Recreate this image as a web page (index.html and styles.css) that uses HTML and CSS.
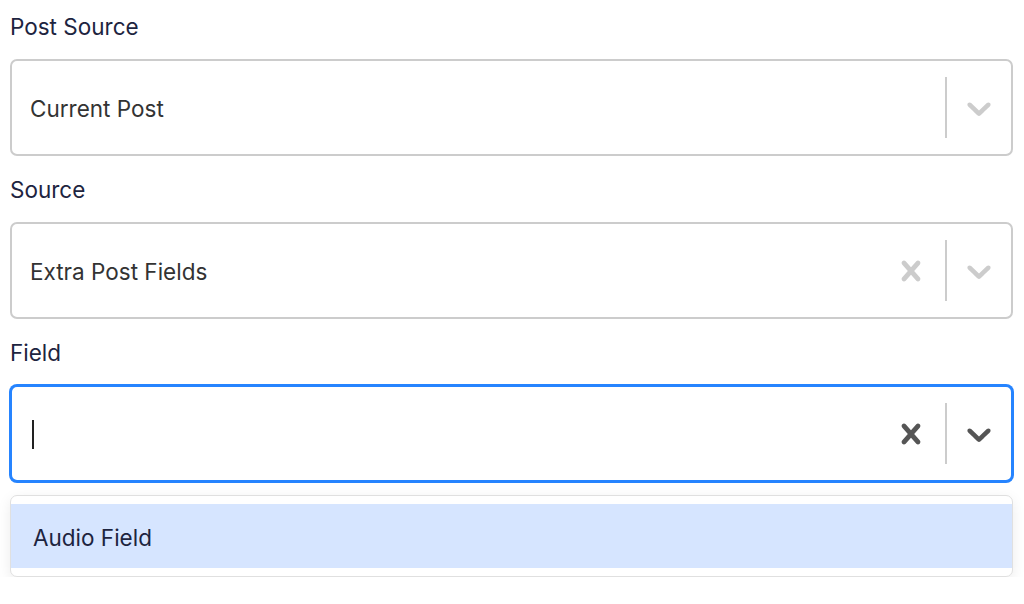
FILE: index.html
```html
<!DOCTYPE html>
<html lang="en">
<head>
    <meta charset="UTF-8">
    <meta name="viewport" content="width=device-width, initial-scale=1.0">
    <title>Dynamic Field</title>
    <link rel="stylesheet" href="styles.css">
</head>
<body>
    <div class="panel">
        <div class="field-group">
            <label class="field-label">Post Source</label>
            <div class="select-control">
                <div class="select-value">Current Post</div>
                <div class="select-indicators">
                    <span class="indicator-separator"></span>
                    <span class="indicator">
                        <svg viewBox="0 0 20 20" width="40" height="40"><path d="M4.516 7.548c0.436-0.446 1.043-0.481 1.576 0l3.908 3.747 3.908-3.747c0.533-0.481 1.141-0.446 1.574 0 0.436 0.445 0.408 1.197 0 1.615-0.406 0.418-4.695 4.502-4.695 4.502-0.217 0.223-0.502 0.335-0.787 0.335s-0.57-0.112-0.789-0.335c0 0-4.287-4.084-4.695-4.502s-0.436-1.17 0-1.615z"/></svg>
                    </span>
                </div>
            </div>
        </div>

        <div class="field-group">
            <label class="field-label">Source</label>
            <div class="select-control">
                <div class="select-value">Extra Post Fields</div>
                <div class="select-indicators">
                    <span class="indicator clear">
                        <svg viewBox="0 0 20 20" width="40" height="40"><path d="M14.348 14.849c-0.469 0.469-1.229 0.469-1.697 0l-2.651-3.030-2.651 3.029c-0.469 0.469-1.229 0.469-1.697 0-0.469-0.469-0.469-1.229 0-1.697l2.758-3.15-2.759-3.152c-0.469-0.469-0.469-1.228 0-1.697s1.228-0.469 1.697 0l2.652 3.031 2.651-3.031c0.469-0.469 1.228-0.469 1.697 0s0.469 1.229 0 1.697l-2.758 3.152 2.758 3.150c0.469 0.469 0.469 1.229 0 1.698z"/></svg>
                    </span>
                    <span class="indicator-separator"></span>
                    <span class="indicator">
                        <svg viewBox="0 0 20 20" width="40" height="40"><path d="M4.516 7.548c0.436-0.446 1.043-0.481 1.576 0l3.908 3.747 3.908-3.747c0.533-0.481 1.141-0.446 1.574 0 0.436 0.445 0.408 1.197 0 1.615-0.406 0.418-4.695 4.502-4.695 4.502-0.217 0.223-0.502 0.335-0.787 0.335s-0.57-0.112-0.789-0.335c0 0-4.287-4.084-4.695-4.502s-0.436-1.17 0-1.615z"/></svg>
                    </span>
                </div>
            </div>
        </div>

        <div class="field-group">
            <label class="field-label">Field</label>
            <div class="select-control is-focused">
                <div class="select-value"><span class="caret"></span></div>
                <div class="select-indicators">
                    <span class="indicator clear">
                        <svg viewBox="0 0 20 20" width="40" height="40"><path d="M14.348 14.849c-0.469 0.469-1.229 0.469-1.697 0l-2.651-3.030-2.651 3.029c-0.469 0.469-1.229 0.469-1.697 0-0.469-0.469-0.469-1.229 0-1.697l2.758-3.15-2.759-3.152c-0.469-0.469-0.469-1.228 0-1.697s1.228-0.469 1.697 0l2.652 3.031 2.651-3.031c0.469-0.469 1.228-0.469 1.697 0s0.469 1.229 0 1.697l-2.758 3.152 2.758 3.150c0.469 0.469 0.469 1.229 0 1.698z"/></svg>
                    </span>
                    <span class="indicator-separator"></span>
                    <span class="indicator">
                        <svg viewBox="0 0 20 20" width="40" height="40"><path d="M4.516 7.548c0.436-0.446 1.043-0.481 1.576 0l3.908 3.747 3.908-3.747c0.533-0.481 1.141-0.446 1.574 0 0.436 0.445 0.408 1.197 0 1.615-0.406 0.418-4.695 4.502-4.695 4.502-0.217 0.223-0.502 0.335-0.787 0.335s-0.57-0.112-0.789-0.335c0 0-4.287-4.084-4.695-4.502s-0.436-1.17 0-1.615z"/></svg>
                    </span>
                </div>
            </div>
            <div class="select-menu">
                <div class="select-option is-active">Audio Field</div>
            </div>
        </div>
    </div>
</body>
</html>
```

FILE: styles.css
```css
body {
    font-family: Inter, "Noto Sans", sans-serif;
    margin: 0;
    padding: 0;
    background-color: #ffffff;
}

.panel {
    display: flex;
    flex-direction: column;
    gap: 18px;
    padding: 11px 11px 0 10px;
}

.field-group {
    display: flex;
    flex-direction: column;
}

.field-label {
    font-size: 22.5px;
    line-height: 31px;
    color: #1d2440;
    margin-bottom: 17px;
}

.select-control {
    display: flex;
    align-items: stretch;
    height: 97px;
    box-sizing: border-box;
    border: 2px solid #cccccc;
    border-radius: 7px;
    background: white;
}

.select-control.is-focused {
    border-color: #2684ff;
    box-shadow: 0 0 0 1px #2684ff;
}

.select-value {
    flex: 1;
    display: flex;
    align-items: center;
    padding: 2px 0 0 18px;
    font-size: 22.5px;
    color: #333333;
}

.caret {
    display: block;
    width: 2px;
    height: 29px;
    background: #222222;
    margin-left: 2px;
}

.select-indicators {
    display: flex;
    align-items: stretch;
}

.indicator {
    display: flex;
    align-items: center;
    padding: 0 12px;
    fill: #cccccc;
}

.indicator.clear {
    padding: 0 14px 0 0;
}

.is-focused .indicator {
    fill: #555555;
}

.indicator-separator {
    width: 2px;
    margin: 16px 0;
    background: #cccccc;
}

.select-menu {
    margin-top: 13px;
    padding: 8px 0;
    border: 1px solid #e0e0e0;
    border-radius: 7px;
    background: white;
    box-shadow: 0 4px 14px rgba(0, 0, 0, 0.08);
}

.select-option {
    height: 64px;
    display: flex;
    align-items: center;
    padding: 2px 0 0 22px;
    box-sizing: border-box;
    font-size: 22.5px;
    color: #1d2440;
}

.select-option.is-active {
    background-color: #d6e5ff;
}
```
